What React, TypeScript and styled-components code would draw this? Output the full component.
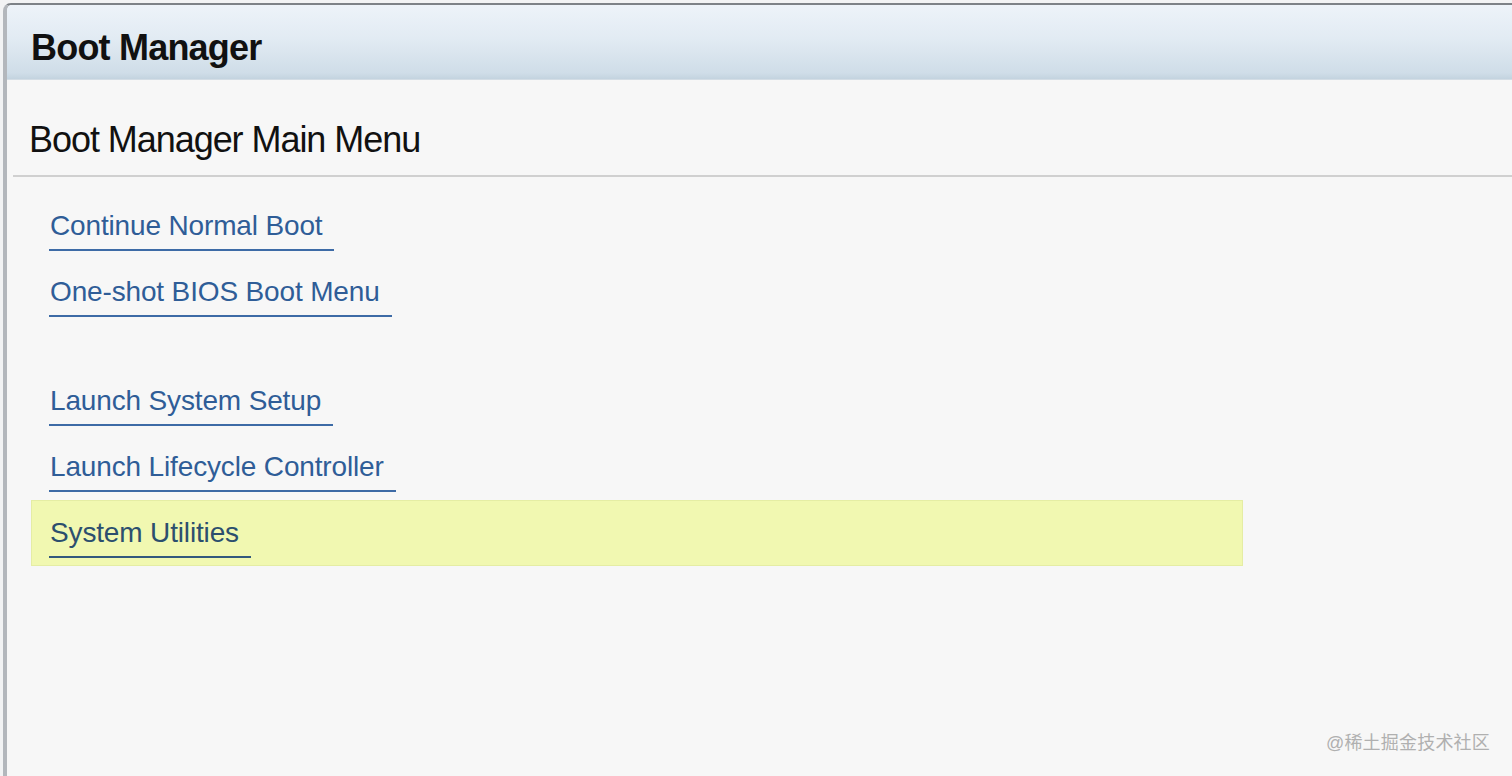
import React from "react";
import styled, { createGlobalStyle } from "styled-components";

const GlobalStyle = createGlobalStyle`
  html, body {
    margin: 0;
    padding: 0;
    background: #f2f3f4;
    overflow: hidden;
  }
  body {
    font-family: "Liberation Sans", Arial, sans-serif;
  }
`;

const Frame = styled.div`
  position: relative;
  margin: 3px 0 0 3px;
  height: calc(100vh - 3px);
  box-sizing: border-box;
  border-top: 2px solid #7d8287;
  border-left: 4px solid #b3b7bc;
  border-top-left-radius: 8px;
  background: #f7f7f7;
  overflow: hidden;
`;

const Header = styled.header`
  height: 75px;
  box-sizing: border-box;
  padding: 23px 0 0 24px;
  background: linear-gradient(#edf3f9 0%, #e2ebf3 45%, #cfdde8 92%, #c3d3df 100%);
  border-bottom: 1px solid #d3dde5;
`;

const HeaderTitle = styled.h1`
  margin: 0;
  font-family: "Liberation Sans", Arial, sans-serif;
  font-weight: 700;
  font-size: 36px;
  line-height: 40px;
  letter-spacing: -0.8px;
  color: #111;
`;

const Main = styled.main`
  margin-left: 6px;
`;

const SectionHead = styled.div`
  padding: 40px 0 15px 16px;
  border-bottom: 2px solid #d0d0d0;
`;

const SectionTitle = styled.h2`
  margin: 0;
  font-weight: 400;
  font-size: 36px;
  line-height: 40px;
  letter-spacing: -1.05px;
  color: #111;
`;

const Menu = styled.nav`
  padding: 16px 0 0 18px;
`;

const Group = styled.div<{ $spaced?: boolean }>`
  margin-top: ${(p) => (p.$spaced ? "43px" : "0")};
`;

const Row = styled.div<{ $active?: boolean }>`
  width: 1212px;
  height: 66px;
  box-sizing: border-box;
  padding-left: ${(p) => (p.$active ? "17px" : "18px")};
  background: ${(p) => (p.$active ? "#f1f8b1" : "transparent")};
  border: ${(p) => (p.$active ? "1px solid #e5eda4" : "none")};
  padding-top: ${(p) => (p.$active ? "0" : "1px")};
`;

const Link = styled.a<{ $active?: boolean }>`
  display: inline-block;
  padding: 16px 12px 7px 1px;
  font-size: 28px;
  line-height: 32px;
  letter-spacing: -0.15px;
  color: ${(p) => (p.$active ? "#2c4f6e" : "#2f5d97")};
  text-decoration: none;
  border-bottom: 2px solid ${(p) => (p.$active ? "#33597d" : "#3d6ba6")};
  cursor: pointer;
`;

const Watermark = styled.div`
  position: absolute;
  right: 22px;
  bottom: 22px;
  font-family: "Liberation Sans", "Noto Sans CJK SC", sans-serif;
  font-size: 18px;
  color: #b0b0b0;
  letter-spacing: 0.2px;
`;

const groups: { label: string; active?: boolean }[][] = [
  [{ label: "Continue Normal Boot" }, { label: "One-shot BIOS Boot Menu" }],
  [
    { label: "Launch System Setup" },
    { label: "Launch Lifecycle Controller" },
    { label: "System Utilities", active: true },
  ],
];

export default function App() {
  return (
    <>
      <GlobalStyle />
      <Frame>
        <Header>
          <HeaderTitle>Boot Manager</HeaderTitle>
        </Header>
        <Main>
          <SectionHead>
            <SectionTitle>Boot Manager Main Menu</SectionTitle>
          </SectionHead>
          <Menu>
            {groups.map((g, gi) => (
              <Group key={gi} $spaced={gi > 0}>
                {g.map((item) => (
                  <Row key={item.label} $active={item.active}>
                    <Link $active={item.active}>{item.label}</Link>
                  </Row>
                ))}
              </Group>
            ))}
          </Menu>
        </Main>
        <Watermark>@稀土掘金技术社区</Watermark>
      </Frame>
    </>
  );
}
